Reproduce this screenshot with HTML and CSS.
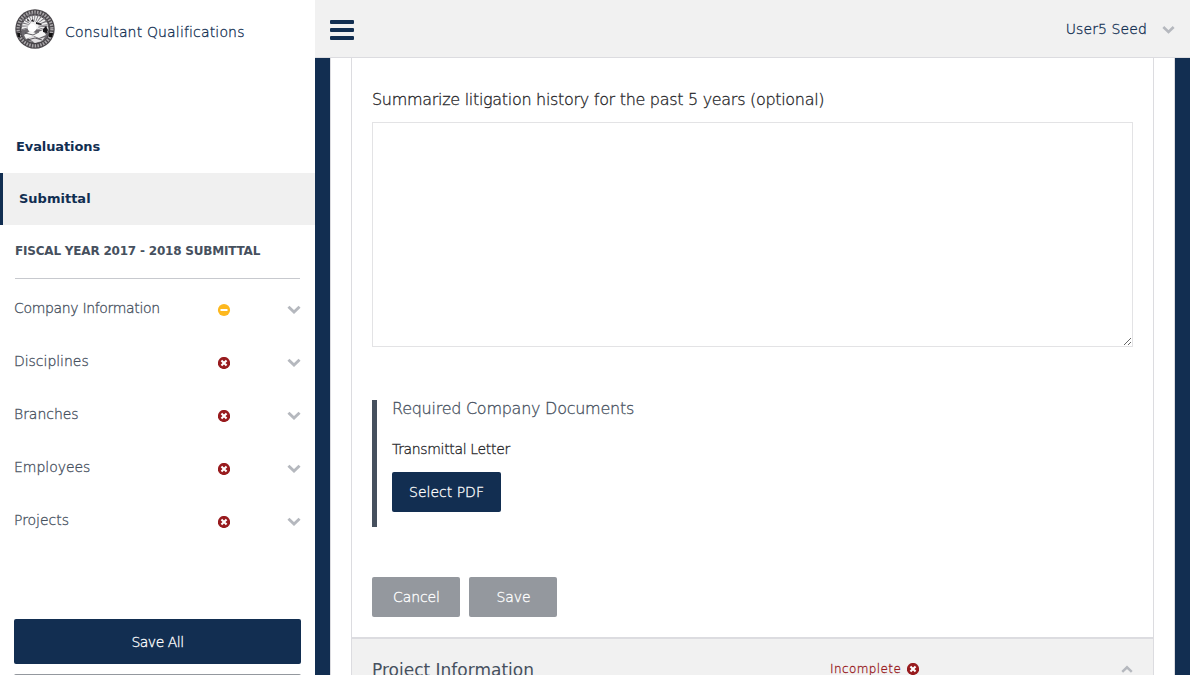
FILE: index.html
```html
<!DOCTYPE html>
<html lang="en">
<head>
<meta charset="utf-8">
<title>Consultant Qualifications</title>
<link rel="stylesheet" href="styles.css">
</head>
<body>
<svg class="defs" width="0" height="0">
  <symbol id="down" viewBox="0 0 14 10"><path d="M2.500 2.700 7 7l4.500-4.300" fill="none" stroke="currentColor" stroke-width="2.900" stroke-linecap="square" stroke-linejoin="miter"/></symbol>
  <symbol id="error" viewBox="0 0 12 12"><circle cx="6" cy="6" r="6.100" fill="#981b1e"/><path d="m4.200 4.200 3.600 3.600m0-3.600L4.200 7.800" stroke="#fff" stroke-width="2.100" stroke-linecap="square"/></symbol>
</svg>
<div class="app">
  <aside class="sidebar">
    <div class="brand">
      <svg class="seal" viewBox="0 0 40 40">
        <circle cx="20" cy="20" r="19.700" fill="#4a474b"/>
        <circle cx="20" cy="20" r="16.900" fill="none" stroke="#a9a6a9" stroke-width="3.200" stroke-dasharray="1.500 1.300"/>
        <circle cx="20" cy="20" r="14" fill="#f0f0f0" stroke="#343136" stroke-width=".8"/>
        <circle cx="19" cy="17" r="9" fill="none" stroke="#77747a" stroke-width="9" stroke-dasharray=".9 1.600"/>
        <path d="M7 21c4-1 7-2 9-1l14 1 4 3c-2 6-7 9-14 9S9 31 6.500 25z" fill="#6b686d"/>
        <circle cx="17" cy="19" r="4.300" fill="#fff"/>
        <path d="m9 26 6-4 6 2 7-3 3 5-7 3-5-2-8 3z" fill="#f5f5f5"/>
        <path d="m13 29 5-2 6 3 6-2-3 4-7 2z" fill="#e2e0e2"/>
        <path d="m10 24 8 2 6-3M12 31l8-2 7 2" fill="none" stroke="#39363b" stroke-width=".8"/>
        <path d="m28 20 3-3 2 4-1 3-4-1zM16 12l2-2 1 3zM21 13l6 2-1 1-5-1zM12 10l2 1-1 2z" fill="#19171b"/>
        <path d="M2 24h3v4H3zM34 24h4l-1 4h-3z" fill="#111"/>
      </svg>
      <span>Consultant Qualifications</span>
    </div>
    <nav class="main-nav">
      <a class="nav-link">Evaluations</a>
      <a class="nav-link active">Submittal</a>
    </nav>
    <h2 class="fiscal">FISCAL YEAR 2017 - 2018 SUBMITTAL</h2>
    <ul class="sections">
      <li><span class="name long">Company Information</span><svg class="status" viewBox="0 0 12 12"><circle cx="6" cy="6" r="6.100" fill="#fdb81e"/><path d="M2.500 5h7v2h-7z" fill="#fff"/></svg><svg class="chevron"><use href="#down"/></svg></li>
      <li><span class="name">Disciplines</span><svg class="status"><use href="#error"/></svg><svg class="chevron"><use href="#down"/></svg></li>
      <li><span class="name">Branches</span><svg class="status"><use href="#error"/></svg><svg class="chevron"><use href="#down"/></svg></li>
      <li><span class="name">Employees</span><svg class="status"><use href="#error"/></svg><svg class="chevron"><use href="#down"/></svg></li>
      <li><span class="name">Projects</span><svg class="status"><use href="#error"/></svg><svg class="chevron"><use href="#down"/></svg></li>
    </ul>
    <div class="side-actions">
      <button class="save-all">Save All</button>
      <button class="side-secondary" aria-label="Submit"></button>
    </div>
  </aside>
  <div class="page">
    <header class="topbar">
      <div class="menu"><i></i><i></i><i></i></div>
      <div class="user"><span>User5 Seed</span><svg class="chevron"><use href="#down"/></svg></div>
    </header>
    <main class="sheet">
      <div class="accordion">
        <section class="panel">
          <label class="question" for="litigation">Summarize litigation history for the past 5 years (optional)</label>
          <textarea id="litigation"></textarea>
          <div class="documents">
            <h3>Required Company Documents</h3>
            <p>Transmittal Letter</p>
            <button class="select">Select PDF</button>
          </div>
          <div class="actions"><button>Cancel</button><button>Save</button></div>
        </section>
        <section class="project">
          <h2>Project Information</h2>
          <span class="incomplete">Incomplete</span>
          <svg class="status"><use href="#error"/></svg>
          <svg class="chevron up"><use href="#down"/></svg>
        </section>
      </div>
    </main>
  </div>
</div>
</body>
</html>
```
FILE: styles.css
```css
* { box-sizing: border-box; }
body { margin: 0; font: 300 14px/20px "DejaVu Sans", sans-serif; overflow: hidden; color: #252528; }
h2, h3, p, ul { margin: 0; padding: 0; }
.defs { display: block; height: 0; }
.app { display: flex; width: 1190px; height: 675px; overflow: hidden; }
.sidebar { width: 315px; flex: none; background: #fff; display: flex; flex-direction: column; }
.sidebar > * { flex: none; }
.brand, .name, .user, .question, .documents, .incomplete, button { -webkit-text-stroke: .3px currentColor; }
.brand { height: 121px; padding: 9px 15px; display: flex; gap: 10px; color: #112e51; }
.brand span { padding-top: 13px; height: 33px; white-space: nowrap; letter-spacing: .16px; }
.seal { width: 40px; height: 40px; flex: none; }
.nav-link { display: block; height: 52px; padding: 0 16px; font-size: 13px; font-weight: 700; line-height: 51px; letter-spacing: -.1px; color: #112e51; }
.nav-link.active { border-left: 3px solid #112e51; background: #f0f0f0; letter-spacing: 0; }
.fiscal { height: 54px; margin: 0 15px; border-bottom: 1px solid #c7c9ce; font-size: 12px; font-weight: 700; line-height: 52px; letter-spacing: -.2px; color: #46505e; white-space: nowrap; }
.sections { list-style: none; padding: 3px 14px 0; height: 340px; }
.sections li { display: flex; align-items: center; height: 53px; color: #46505e; }
.name { width: 204px; padding-bottom: 2px; letter-spacing: -.03px; }
.name.long { letter-spacing: -.33px; }
.status { width: 12px; height: 12px; flex: none; margin-top: 3px; overflow: visible; }
.chevron { width: 14px; height: 10px; flex: none; color: #b5b8be; }
.sections .chevron { margin: 2px 0 0 57px; }
.side-actions { padding: 0 14px; display: flex; flex-direction: column; gap: 10px; }
button { border: 0; padding: 0; border-radius: 2px; font: inherit; color: #fff; background: #94989e; }
.save-all { height: 45px; letter-spacing: -.5px; background: #122e51; }
.side-secondary { height: 45px; }
.page { flex: 1; background: #122e51; }
.topbar { height: 58px; padding: 0 15px; background: #f1f1f1; border-bottom: 1px solid #dcdce0; display: flex; justify-content: space-between; }
.menu { width: 24px; padding-top: 20px; display: flex; flex-direction: column; gap: 4px; }
.menu i { height: 4px; border-radius: 1px; background: #112e51; }
.user { display: flex; align-items: center; gap: 15px; color: #112e51; height: 58px; letter-spacing: .1px; }
.user .chevron { margin-top: 2px; width: 13px; }
.sheet { height: 617px; margin: 0 15px; padding: 0 20px; background: #fff; border: solid #dcdce0; border-width: 0 1px; overflow: hidden; }
.accordion { border: solid #dcdce0; border-width: 0 1px; height: 617px; }
.panel { height: 579px; padding: 31px 20px 0; }
.question { display: block; height: 33px; font-size: 16px; line-height: 22px; letter-spacing: -.3px; }
textarea { display: block; width: 761px; height: 225px; border: 1px solid #e3e3e5; padding: 10px; font: inherit; resize: both; }
.documents { margin-top: 53px; height: 127px; border-left: 5px solid #46505e; padding-left: 15px; }
.documents h3 { font-size: 16px; font-weight: 300; line-height: 17px; letter-spacing: -.26px; color: #46505e; }
.documents p { margin-top: 22px; line-height: 20px; letter-spacing: -.34px; }
.select { display: block; width: 109px; height: 40px; margin-top: 13px; background: #122e51; }
.actions { display: flex; gap: 9px; margin-top: 50px; }
.actions button { width: 88px; height: 40px; padding-left: 1px; letter-spacing: -.1px; }
.project { height: 64px; padding: 0 20px; border-top: 2px solid #dcdce0; background: #f1f1f1; display: flex; align-items: center; }
.project h2 { width: 458px; font-size: 17px; font-weight: 400; color: #46505e; }
.incomplete { width: 77px; font-size: 12px; line-height: 18px; padding-bottom: 2px; letter-spacing: .4px; color: #981b1e; }
.project .status { margin-top: -3px; }
.up { transform: rotate(180deg); margin: -3px 0 0 auto; width: 12px; }
```
